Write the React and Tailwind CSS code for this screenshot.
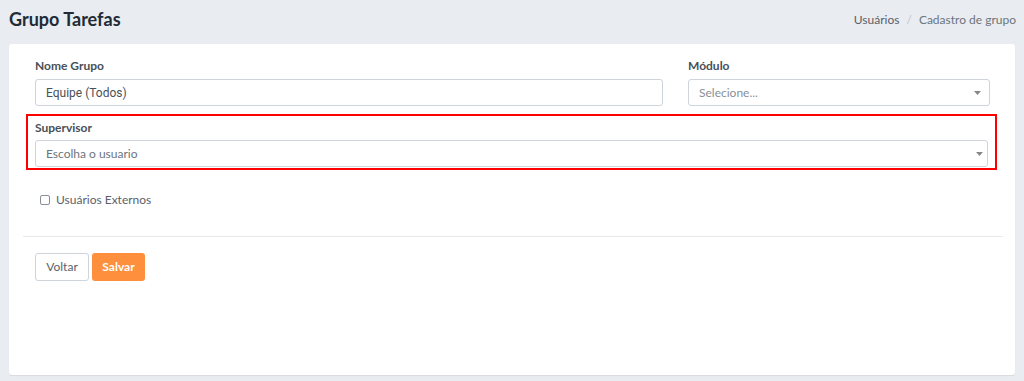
export default function App() {
  const nunito = { fontFamily: "Lato, 'Noto Sans', sans-serif" };
  return (
    <div className="w-[1024px] h-[381px] bg-[#e9ecf1] overflow-hidden" style={nunito}>
      <div className="flex items-center justify-between pl-[9px] pr-[8px] h-[44px] pb-[7px]">
        <h1 className="text-[18px] font-bold text-[#212b36] leading-none">Grupo Tarefas</h1>
        <div className="flex items-center text-[12px] text-[#6c757d] pt-[2px]">
          <span className="text-[#58606a]">Usuários</span>
          <span className="mx-[7px] text-[#c0c4c9]">/</span>
          <span>Cadastro de grupo</span>
        </div>
      </div>
      <div className="mx-[9px] w-[1006px] h-[331px] bg-white rounded-[3px] shadow-[0_1px_1px_rgba(0,0,0,0.08)] pt-[14px] px-[14px]">
        <div className="flex gap-[25px] px-[12px]">
          <div className="w-[628px] shrink-0">
            <label className="block text-[12px] font-bold text-[#495057] mb-[5px] leading-[16px]">Nome Grupo</label>
            <div className="h-[27px] border border-[#ced4da] rounded-[3px] flex items-center px-[10px] text-[12px] text-[#495057]" style={{ fontFamily: "Roboto, sans-serif" }}>
              Equipe (Todos)
            </div>
          </div>
          <div className="w-[302px] shrink-0">
            <label className="block text-[12px] font-bold text-[#495057] mb-[5px] leading-[16px]">Módulo</label>
            <div className="h-[27px] border border-[#ced4da] rounded-[3px] flex items-center justify-between pl-[10px] pr-[8px] text-[12px] text-[#8a9097]">
              <span>Selecione...</span>
              <Caret />
            </div>
          </div>
        </div>
        <div className="mt-[8px] mx-[3px] border-2 border-[#ff0000] pt-[4px] pb-[1px] px-[7px] w-[971px]">
          <label className="block text-[12px] font-bold text-[#495057] mb-[4px] leading-[16px]">Supervisor</label>
          <div className="h-[27px] border border-[#ced4da] rounded-[3px] flex items-center justify-between pl-[10px] pr-[4px] text-[12px] text-[#6c757d]">
            <span>Escolha o usuario</span>
            <Caret />
          </div>
        </div>
        <div className="flex items-center gap-[6px] pl-[17px] mt-[21px] text-[12px] leading-[18px] text-[#5a6169]">
          <span className="w-[10px] h-[10px] border border-[#8a9097] rounded-[2px] bg-white inline-block"></span>
          <span>Usuários Externos</span>
        </div>
        <div className="h-px bg-[#e6e9ec] mt-[27px] w-[980px]"></div>
        <div className="flex gap-[3px] pl-[12px] mt-[16px]">
          <button className="w-[54px] h-[28px] border border-[#ced4da] rounded-[3px] text-[12px] text-[#5a6169] bg-white">Voltar</button>
          <button className="w-[53px] h-[28px] rounded-[3px] text-[12px] font-bold text-white bg-[#fd8f3d]">Salvar</button>
        </div>
      </div>
    </div>
  );
}

function Caret() {
  return (
    <svg width="7" height="4" viewBox="0 0 7 4">
      <path d="M0 0 L7 0 L3.5 4 Z" fill="#888" />
    </svg>
  );
}
